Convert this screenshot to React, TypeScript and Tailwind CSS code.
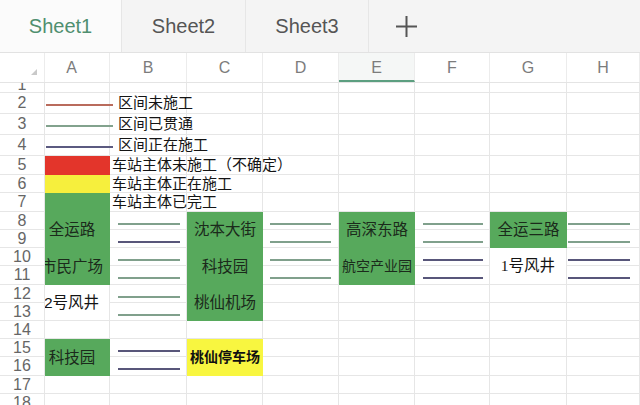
import { Fragment } from "react";

const COLS = "grid-cols-[45px_65px_77px_76px_76px_76px_75px_77px_73px]";
const ROWS =
  "grid-rows-[10px_21px_21px_21px_19px_18px_19px_18px_18px_18px_19px_18px_18px_18px_18px_19px_18px_18px]";

const ROW_START = [
  "row-start-1",
  "row-start-2",
  "row-start-3",
  "row-start-4",
  "row-start-5",
  "row-start-6",
  "row-start-7",
  "row-start-8",
  "row-start-9",
  "row-start-10",
  "row-start-11",
  "row-start-12",
  "row-start-13",
  "row-start-14",
  "row-start-15",
  "row-start-16",
  "row-start-17",
  "row-start-18",
];
const COL_START = ["col-start-1", "col-start-2", "col-start-3", "col-start-4", "col-start-5", "col-start-6", "col-start-7", "col-start-8", "col-start-9"];

const GREEN = "bg-[#57a95c] text-[#1b2a1b]";
const LINE_GREEN = "bg-[#80a08c]";
const LINE_PURPLE = "bg-[#58567a]";

type Block = { cls: string; text?: string; size?: string };

// merged / coloured cells, painted over the plain grid
const blocks: Block[] = [
  { cls: "row-start-5 col-start-2 bg-[#e3352b]" },
  { cls: "row-start-6 col-start-2 bg-[#f6ef3d]" },
  { cls: `row-start-7 col-start-2 ${GREEN}` },
  { cls: `row-start-8 row-span-2 col-start-2 pr-[11px] ${GREEN}`, text: "全运路" },
  { cls: `row-start-10 row-span-2 col-start-2 pr-[11px] ${GREEN}`, text: "市民广场" },
  { cls: "row-start-12 row-span-2 col-start-2 pr-[11px] bg-white border-b border-r border-[#e6e6e6] text-[#141414]", text: "2号风井" },
  { cls: `row-start-15 row-span-2 col-start-2 pr-[11px] ${GREEN}`, text: "科技园" },
  { cls: `row-start-8 row-span-2 col-start-4 ${GREEN}`, text: "沈本大街" },
  { cls: `row-start-10 row-span-2 col-start-4 ${GREEN}`, text: "科技园" },
  { cls: `row-start-12 row-span-2 col-start-4 ${GREEN}`, text: "桃仙机场" },
  { cls: "row-start-15 row-span-2 col-start-4 bg-[#f8f640] font-bold text-[#111]", text: "桃仙停车场", size: "text-[14px]" },
  { cls: `row-start-8 row-span-2 col-start-6 ${GREEN}`, text: "高深东路" },
  { cls: `row-start-10 row-span-2 col-start-6 ${GREEN}`, text: "航空产业园", size: "text-[14px]" },
  { cls: `row-start-8 row-span-2 col-start-8 ${GREEN}`, text: "全运三路" },
  { cls: "row-start-10 row-span-2 col-start-8 bg-white border-b border-r border-[#e6e6e6] text-[#141414]", text: "1号风井" },
];

const lines = [
  { cls: "row-start-8 col-start-3 pl-2 pr-[7px]", color: LINE_GREEN },
  { cls: "row-start-9 col-start-3 pl-2 pr-[7px]", color: LINE_PURPLE },
  { cls: "row-start-10 col-start-3 pl-2 pr-[7px]", color: LINE_GREEN },
  { cls: "row-start-11 col-start-3 pl-2 pr-[7px]", color: LINE_GREEN },
  { cls: "row-start-12 col-start-3 pl-2 pr-[7px]", color: LINE_GREEN },
  { cls: "row-start-13 col-start-3 pl-2 pr-[7px]", color: LINE_GREEN },
  { cls: "row-start-15 col-start-3 pl-2 pr-[7px]", color: LINE_PURPLE },
  { cls: "row-start-16 col-start-3 pl-2 pr-[7px]", color: LINE_PURPLE },
  { cls: "row-start-8 col-start-5 pl-[7px] pr-2", color: LINE_GREEN },
  { cls: "row-start-9 col-start-5 pl-[7px] pr-2", color: LINE_GREEN },
  { cls: "row-start-10 col-start-5 pl-[7px] pr-2", color: LINE_GREEN },
  { cls: "row-start-11 col-start-5 pl-[7px] pr-2", color: LINE_GREEN },
  { cls: "row-start-8 col-start-7 pl-2 pr-[7px]", color: LINE_GREEN },
  { cls: "row-start-9 col-start-7 pl-2 pr-[7px]", color: LINE_GREEN },
  { cls: "row-start-10 col-start-7 pl-2 pr-[7px]", color: LINE_PURPLE },
  { cls: "row-start-11 col-start-7 pl-2 pr-[7px]", color: LINE_PURPLE },
  { cls: "row-start-8 col-start-9 pl-px pr-[10px]", color: LINE_GREEN },
  { cls: "row-start-9 col-start-9 pl-px pr-[10px]", color: LINE_GREEN },
  { cls: "row-start-10 col-start-9 pl-px pr-[10px]", color: LINE_PURPLE },
  { cls: "row-start-11 col-start-9 pl-px pr-[10px]", color: LINE_PURPLE },
];

const legend = [
  { cls: "row-start-2 col-start-3 pl-2", text: "区间未施工" },
  { cls: "row-start-3 col-start-3 pl-2", text: "区间已贯通" },
  { cls: "row-start-4 col-start-3 pl-2", text: "区间正在施工" },
  { cls: "row-start-5 col-start-3 pl-[2px]", text: "车站主体未施工（不确定）" },
  { cls: "row-start-6 col-start-3 pl-[2px]", text: "车站主体正在施工" },
  { cls: "row-start-7 col-start-3 pl-[2px]", text: "车站主体已完工" },
];

const legendLines = [
  { cls: "row-start-2 col-start-2", color: "bg-[#b96b5c]" },
  { cls: "row-start-3 col-start-2", color: "bg-[#82a28d]" },
  { cls: "row-start-4 col-start-2", color: "bg-[#5b5a80]" },
];

const letters = ["A", "B", "C", "D", "E", "F", "G", "H"];

function Tabs() {
  return (
    <div className="flex h-[53px] border-b border-[#e2e2e2] bg-[#f4f4f4] text-[20px]">
      <div className="flex w-[122px] items-center justify-center border-r border-[#e6e6e6] bg-[#fbfbfb] text-[#4f8f6f]">Sheet1</div>
      <div className="flex w-[124px] items-center justify-center border-r border-[#e6e6e6] text-[#555]">Sheet2</div>
      <div className="flex w-[123px] items-center justify-center border-r border-[#e6e6e6] text-[#555]">Sheet3</div>
      <div className="flex w-[74px] items-center justify-center text-[#555]">
        <svg width="23" height="23" viewBox="0 0 23 23" fill="none" stroke="currentColor" strokeWidth="2">
          <path d="M11.5 1v21M1 11.5h21" />
        </svg>
      </div>
    </div>
  );
}

function ColumnHeader() {
  return (
    <div className={`grid h-[30px] ${COLS} border-b border-[#e4e4e4] bg-white text-[16px] text-[#7c7c7c]`}>
      <div className="flex items-end justify-end border-r border-[#ececec] pb-[7px] pr-[7px]">
        <svg width="6" height="6" viewBox="0 0 6 6">
          <path d="M6 0V6H0Z" fill="#c9c9c9" />
        </svg>
      </div>
      {letters.map((l, i) => (
        <div
          key={l}
          className={`flex items-center justify-center border-r border-[#ececec] ${i === 0 ? "pr-[11px]" : ""} ${
            l === "E" ? "border-b-2 border-b-[#5c9f80] bg-[#f5f7f6] pt-[2px]" : ""
          }`}
        >
          {l}
        </div>
      ))}
    </div>
  );
}

export default function App() {
  return (
    <div className="h-[405px] w-[640px] overflow-hidden bg-white font-['Liberation_Sans','Noto_Sans_CJK_SC',sans-serif]">
      <Tabs />
      <ColumnHeader />
      <div className={`grid ${COLS} ${ROWS}`}>
        {ROW_START.map((rowCls, r) => (
          <Fragment key={rowCls}>
            {COL_START.map((colCls, c) =>
              c === 0 ? (
                <div
                  key={colCls}
                  className={`${rowCls} ${colCls} flex ${r === 0 ? "items-end leading-[14px]" : "items-center"} justify-center overflow-hidden border-b border-r border-[#e6e6e6] text-[16px] text-[#666]`}
                >
                  {r + 1}
                </div>
              ) : (
                <div key={colCls} className={`${rowCls} ${colCls} border-b border-r border-[#e6e6e6]`} />
              ),
            )}
          </Fragment>
        ))}

        {legendLines.map((l) => (
          <div key={l.cls} className={l.cls}>
            <div className={`ml-px mt-[11px] h-[1.5px] w-[67px] ${l.color}`} />
          </div>
        ))}

        {blocks.map((b) => (
          <div
            key={b.cls}
            className={`${b.cls} flex items-center justify-center overflow-hidden whitespace-nowrap ${b.size ?? "text-[15.5px]"}`}
          >
            {b.text === "1号风井" ? (
              <span>
                <span className="font-['Liberation_Serif',serif]">1</span>号风井
              </span>
            ) : (
              b.text
            )}
          </div>
        ))}

        {legend.map((l) => (
          <div key={l.cls} className={`${l.cls} col-span-6 flex items-center whitespace-nowrap text-[15px] text-[#141414]`}>
            {l.text}
          </div>
        ))}

        {lines.map((l) => (
          <div key={l.cls} className={`${l.cls} flex items-start pt-[11px]`}>
            <div className={`h-[2px] w-full ${l.color}`} />
          </div>
        ))}
      </div>
    </div>
  );
}
